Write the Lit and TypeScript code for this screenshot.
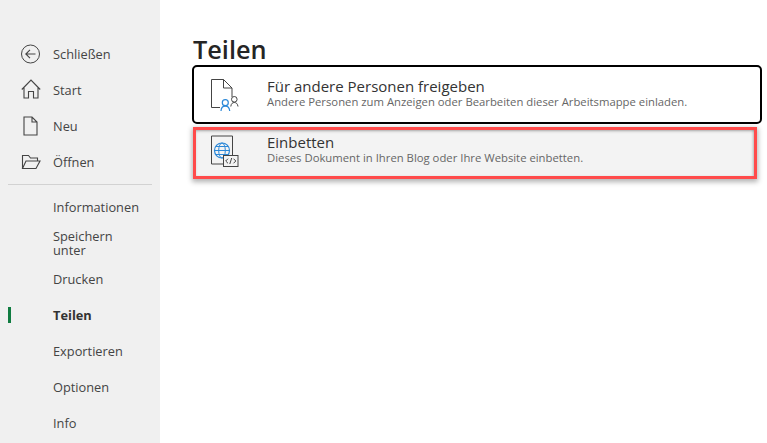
import { LitElement, html, css, svg } from "lit";
import { customElement } from "lit/decorators.js";

const ink = "#444";
const back = svg`<circle cx="12.500" cy="12" r="9" fill="none" stroke="${ink}" stroke-width="1"/><path d="M17.500 12H8M12 7.800 7.800 12l4.200 4.200" fill="none" stroke="${ink}" stroke-width="1.100"/>`;
const home = svg`<path d="M3.800 11.500 13 2l9.200 9.500M6 9.500V20h4.500v-6.500h5V20H20V9.500" fill="none" stroke="${ink}" stroke-width="1.100"/>`;
const page = svg`<path d="M6 3h8l5 5v13H6zM14 3v5h5" fill="none" stroke="${ink}" stroke-width="1.100"/>`;
const folder = svg`<path d="M4.500 18.500V5.500h6l2 2.500h7v3M4.500 18.500h13.500l4-7.500H8z" fill="none" stroke="${ink}" stroke-width="1.100"/>`;

const shareIcon = svg`<path d="M12 29.500H3.500v-28h12l8.500 8.500v9M15.500 1.500v8.500H24" fill="none" stroke="#444" stroke-width="1"/>
<circle cx="17.300" cy="24.700" r="3" fill="none" stroke="#2b88d8" stroke-width="1.200"/><path d="M13 33c.2-3.500 2-4.800 4.300-4.800s4.100 1.300 4.400 4.800" fill="none" stroke="#2b88d8" stroke-width="1.200"/>
<circle cx="26.300" cy="21.300" r="2.800" fill="none" stroke="#444" stroke-width="1"/><path d="M22.800 28.500c.3-3 1.800-4 3.500-4s3.300 1 3.700 4" fill="none" stroke="#444" stroke-width="1"/>`;
const embedIcon = svg`<path d="M15 30H3.500V2H24.500V21" fill="none" stroke="#444" stroke-width="1"/>
<circle cx="14" cy="16.500" r="7.500" fill="#f3f3f3" stroke="#2b88d8" stroke-width="1.200"/><ellipse cx="14" cy="16.500" rx="3.300" ry="7.500" fill="none" stroke="#2b88d8" stroke-width="1"/><path d="M6.500 16.500h15M7.800 12.500h12.400M7.800 20.500h12.400" fill="none" stroke="#2b88d8" stroke-width="1"/>
<rect x="15.500" y="21.500" width="14.500" height="11" fill="#f3f3f3" stroke="#444" stroke-width="1"/>
<path d="M20 24.700 17.700 27l2.300 2.300M25.500 24.700l2.300 2.300-2.300 2.300M23.700 24l-1.900 6" fill="none" stroke="#444" stroke-width="1"/>`;

@customElement("app-root")
export class AppRoot extends LitElement {
  static styles = css`
    :host { display: flex; width: 767px; height: 443px; overflow: hidden; background: #fff;
      font-family: "Open Sans", "Noto Sans", sans-serif; color: #444; }
    .side { width: 160px; flex: none; background: #f0f0f0; padding-top: 36px; box-sizing: border-box; }
    .row { height: 36px; display: flex; align-items: center; font-size: 12.800px; line-height: 14px; position: relative; }
    .row svg { width: 24px; height: 24px; margin-left: 18px; margin-right: 11px; flex: none; }
    .row .txt { margin-left: 53px; max-width: 90px; }
    .row svg + .txt { margin-left: 0; }
    .active { font-weight: 700; color: #333; }
    .active::before { content: ""; position: absolute; left: 8px; top: 10px; width: 3px; height: 16px; background: #107c41; }
    hr { border: 0; height: 1px; background: #d2d2d2; margin: 4px 8px 4px; }
    .main { flex: 1; padding: 35px 5px 0 32px; }
    h1 { margin: 0 0 2px 1px; font-size: 25.300px; line-height: 28px; font-weight: 600; color: #252525; }
    .card { display: flex; align-items: flex-start; box-sizing: border-box; }
    .one { height: 59px; border: 2px solid #000; border-radius: 5px; padding: 10px 0 0 14px; margin-bottom: 3px; }
    .one svg { margin-top: 1px; }
    .two { height: 52px; margin: 0 5px 0 1px; border: 3px solid #ff4b4b; background: #f3f3f3; padding: 3px 0 0 12px;
      box-shadow: 0 2px 5px 1px rgba(0,0,0,.3), inset 0 2px 3px -1px rgba(0,0,0,.3), inset -2px 0 3px -1px rgba(0,0,0,.2); }
    .card svg { width: 38px; height: 36px; flex: none; margin-right: 21px; }
    .two svg { margin-top: 1px; }
    .t { font-size: 15px; line-height: 18px; color: #333; }
    .s { font-size: 11.300px; line-height: 14px; color: #666; }
  `;

  private nav(label: string, icon: unknown, active = false) {
    return html`<div class="row ${active ? "active" : ""}">
      ${icon ? html`<svg viewBox="0 0 24 24">${icon}</svg>` : ""}<span class="txt">${label}</span>
    </div>`;
  }

  render() {
    return html`
      <nav class="side">
        ${this.nav("Schließen", back)}
        ${this.nav("Start", home)}
        ${this.nav("Neu", page)}
        ${this.nav("Öffnen", folder)}
        <hr />
        ${this.nav("Informationen", null)}
        ${this.nav("Speichern unter", null)}
        ${this.nav("Drucken", null)}
        ${this.nav("Teilen", null, true)}
        ${this.nav("Exportieren", null)}
        ${this.nav("Optionen", null)}
        ${this.nav("Info", null)}
      </nav>
      <main class="main">
        <h1>Teilen</h1>
        <div class="card one">
          <svg viewBox="0 0 38 36">${shareIcon}</svg>
          <div><div class="t">Für andere Personen freigeben</div>
          <div class="s">Andere Personen zum Anzeigen oder Bearbeiten dieser Arbeitsmappe einladen.</div></div>
        </div>
        <div class="card two">
          <svg viewBox="0 0 38 36">${embedIcon}</svg>
          <div><div class="t">Einbetten</div>
          <div class="s">Dieses Dokument in Ihren Blog oder Ihre Website einbetten.</div></div>
        </div>
      </main>
    `;
  }
}
